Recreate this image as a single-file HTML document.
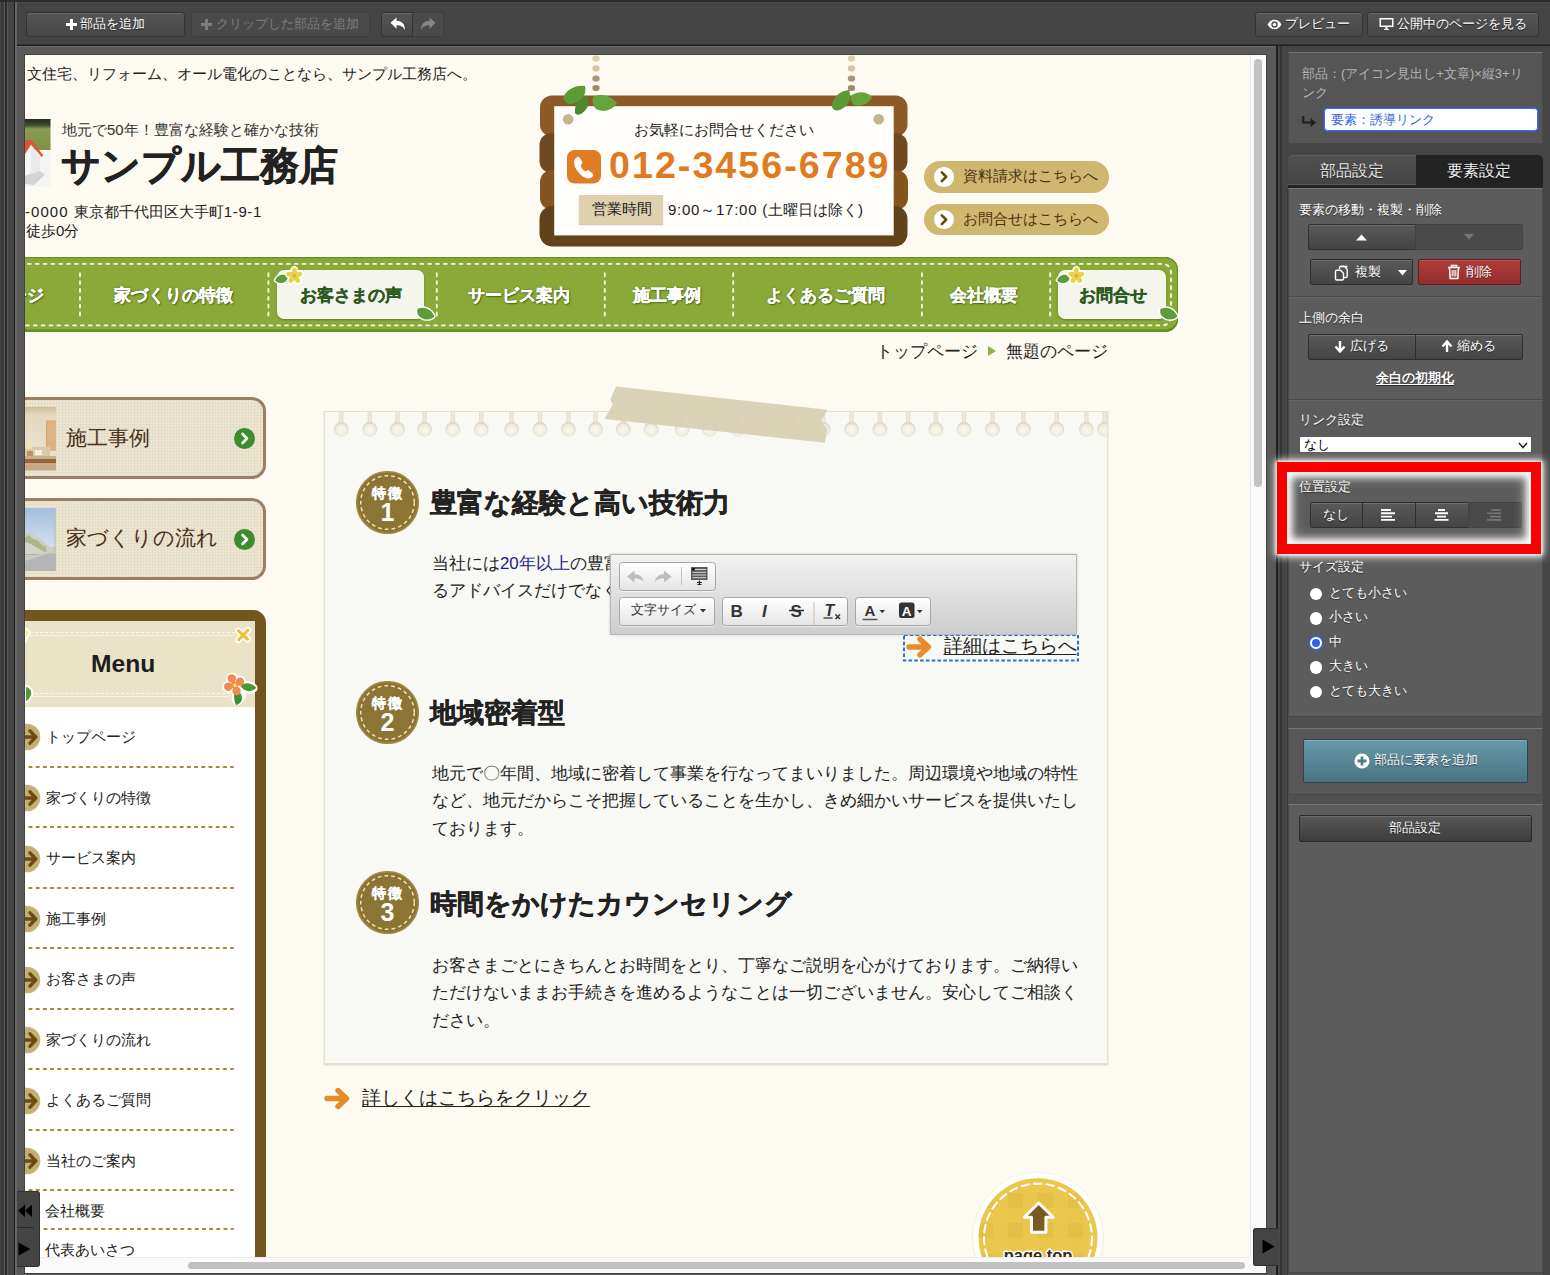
<!DOCTYPE html>
<html lang="ja">
<head>
<meta charset="utf-8">
<title>editor</title>
<style>
*{box-sizing:border-box;margin:0;padding:0}
html,body{width:1550px;height:1275px;overflow:hidden;background:#595959;font-family:"Liberation Sans",sans-serif;}
body{position:relative;color:#fff}
.abs{position:absolute}
/* ---------- app chrome ---------- */
#topbar{position:absolute;left:0;top:0;width:1550px;height:47.300px;background:#444;border-top:2.300px solid #2b2b2b;border-bottom:1px solid #676767;box-shadow:inset 0 -1.500px 0 #1e1e1e,inset 0 .8px 0 #4a4a4a}
#lgut{position:absolute;z-index:3;left:0;top:2.300px;width:16.500px;height:1275px;background:linear-gradient(90deg,#444 0 1.500px,#3a3a3a 1.500px 3.800px,#585858 3.800px 5px,#2c2c2c 5px 7px,#555 7px 8.200px,#444 8.200px 14px,#1f1f1f 14px 15.500px,#656565 15.500px 16.500px)}
#lgut i{position:absolute;top:0;bottom:0;width:1px;background:#555}
.tbtn{position:absolute;top:11.500px;height:25px;border:1px solid #333;border-radius:3px;background:linear-gradient(#555,#474747);color:#fff;font-size:12.5px;line-height:23px;text-align:center;text-shadow:0 1px 1px #222;box-shadow:inset 0 1px 0 rgba(255,255,255,.12);white-space:nowrap}
.tbtn.dis{color:#7d7d7d;background:#4a4a4a;border-color:#3e3e3e;box-shadow:none;text-shadow:none}
.tbtn svg{vertical-align:-2px}
/* ---------- page frame ---------- */
#frame{position:absolute;left:25px;top:55px;width:1241px;height:1217.5px;background:#fafafa;overflow:hidden;outline:1px solid #424242}
#page{position:absolute;left:0;top:0;width:1225px;height:1202px;overflow:hidden;background:#fdfaf1;box-shadow:1px 0 0 #e6e6ea,0 1px 0 #ececec}
#pg{position:absolute;left:-25px;top:-55px;width:1550px;height:1275px;color:#222}
#vthumb{position:absolute;left:1229px;top:4px;width:8px;height:428px;border-radius:4px;background:#c1c1c1}
#hthumb{position:absolute;left:163px;top:1206.5px;width:1057px;height:7px;border-radius:4px;background:#c1c1c1}
</style>
</head>
<body>
<!-- left gutter -->
<div id="lgut"></div>
<!-- top toolbar -->
<div id="topbar"></div>
<div class="tbtn" style="left:26px;width:159px"><svg width="11" height="11" viewBox="0 0 11 11"><path d="M4 0h3v4h4v3H7v4H4V7H0V4h4z" fill="#fff"/></svg> 部品を追加</div>
<div class="tbtn dis" style="left:190.5px;width:179px"><svg width="11" height="11" viewBox="0 0 11 11"><path d="M4 0h3v4h4v3H7v4H4V7H0V4h4z" fill="#7d7d7d"/></svg> クリップした部品を追加</div>
<div class="tbtn" style="left:380.500px;width:32px;border-radius:3px 0 0 3px"></div>
<div class="tbtn dis" style="left:412.500px;width:31px;border-radius:0 3px 3px 0;border-left:none"></div>
<svg class="abs" style="left:389.500px;top:16.500px" width="16" height="14" viewBox="0 0 16 14"><path d="M.5 5.800L6.500.5v3.300c5.500.2 8.500 3.200 8.500 9.500-1.500-3.600-4-5-8.500-5v3.500z" fill="#fff"/></svg>
<svg class="abs" style="left:420px;top:16.500px" width="16" height="14" viewBox="0 0 16 14"><path d="M15.500 5.800L9.500.5v3.300C4 4 1 7 1 13.300c1.500-3.600 4-5 8.500-5v3.500z" fill="#868686"/></svg>

<!-- page frame -->
<div id="frame">
  <div id="page"><div id="pg">
  <style>
.t{position:absolute;white-space:nowrap;line-height:1}
.nav{position:absolute;left:0;top:257.200px;width:1177.5px;height:74.800px;background:#8aa938;border-radius:0 13px 13px 0;box-shadow:inset 0 -2.600px 0 #648f21,inset 0 1.200px 0 #6a9424,inset -1.200px 0 0 #6a9424}
.nav .dash{position:absolute;left:-10px;right:5.5px;top:6px;bottom:5.5px;border:2px dashed #f3f5dc;border-radius:9px}
.nav b.v{position:absolute;top:14px;height:46px;width:0;border-left:2px dashed #f3f5dc}
.nav .it{position:absolute;top:31px;line-height:1;font-size:16.8px;font-weight:bold;color:#fff;-webkit-text-stroke:.35px #fff;text-shadow:1px 1px 1.500px #3f5a12,0 0 2px #4c6a18;white-space:nowrap;transform:translateX(-50%)}
.nav .hl{position:absolute;top:12.800px;height:48.800px;background:#f4f5ec;border-radius:7px;box-shadow:0 1px 2px rgba(60,80,20,.5)}
.nav .it.g{color:#2b5a1f;text-shadow:none;-webkit-text-stroke:.35px #2b5a1f}
.pill{position:absolute;left:923.5px;width:185px;height:31.5px;border-radius:16px;background:#cfb76f;color:#4a3210;font-size:14.8px;line-height:31.5px;padding-left:39.500px;white-space:nowrap}
.pill i{position:absolute;left:10.5px;top:6px;width:19.5px;height:19.5px;border-radius:50%;background:#fff}
</style>
<!-- caption -->
<div class="t" style="left:27px;top:67px;font-size:14.6px;color:#222">文住宅、リフォーム、オール電化のことなら、サンプル工務店へ。</div>
<!-- logo -->
<svg class="abs" style="left:25px;top:118.5px" width="25.5" height="68" viewBox="0 0 25.5 68">
 <defs><linearGradient id="lg1" x1="0" y1="0" x2="0" y2="1"><stop offset="0" stop-color="#23291f"/><stop offset=".2" stop-color="#3c4a33"/><stop offset=".32" stop-color="#8a9b52"/><stop offset="1" stop-color="#7c9340"/></linearGradient></defs>
 <rect width="25.5" height="68" fill="#f5f5f5"/>
 <rect width="25.5" height="31" fill="url(#lg1)"/>
 <path d="M0 35L6 25.500 15 37V52L0 57z" fill="#e9e9e9"/>
 <path d="M0 37L6 27v26L0 57z" fill="#f6f6f6"/>
 <path d="M0 21H6.700L18.300 36.500 16.500 38 6 25 0 35z" fill="#e0533a"/>
 <path d="M0 57L15 52l5 3.500L9 66 0 65z" fill="#d4d4d4"/>
</svg>
<div class="t" style="left:62px;top:122.5px;font-size:14.9px;color:#333">地元で50年！豊富な経験と確かな技術</div>
<div class="t" style="left:61px;top:145.5px;font-size:39.300px;font-weight:bold;color:#222;-webkit-text-stroke:.7px #222">サンプル工務店</div>
<div class="t" style="left:25px;top:204px;font-size:15px;color:#222"><span style="letter-spacing:1.05px">-0000 </span>東京都千代田区大手町<span style="letter-spacing:.6px">1-9-1</span></div>
<div class="t" style="left:26px;top:223px;font-size:15px;color:#222">徒歩0分</div>

<!-- hanging board -->
<svg class="abs" style="left:530px;top:55px" width="390" height="200" viewBox="530 55 390 200">
 <g><ellipse cx="596" cy="58.6" rx="3.700" ry="3.100" fill="#dfcfae"/><ellipse cx="596" cy="68.4" rx="3.700" ry="3.100" fill="#d8c4a0"/><ellipse cx="596" cy="78.5" rx="3.700" ry="3.100" fill="#ab9570"/><ellipse cx="596" cy="88" rx="3.700" ry="3.100" fill="#9e8b69"/><ellipse cx="851.5" cy="58.6" rx="3.700" ry="3.100" fill="#dfcfae"/><ellipse cx="851.5" cy="68.4" rx="3.700" ry="3.100" fill="#d8c4a0"/><ellipse cx="851.5" cy="78.5" rx="3.700" ry="3.100" fill="#ab9570"/><ellipse cx="851.5" cy="88" rx="3.700" ry="3.100" fill="#9e8b69"/></g>
 <rect x="540" y="95.5" width="367.5" height="41" rx="12" fill="#8b5a26"/>
 <rect x="539.5" y="133" width="368" height="40" rx="12" fill="#6f4a20"/>
 <rect x="540" y="170" width="368" height="40" rx="12" fill="#83561f"/>
 <rect x="539.5" y="206" width="368" height="40.5" rx="13" fill="#62421b"/>
 <rect x="554.200" y="106.200" width="339.500" height="129.200" fill="#fffefb"/>
 <circle cx="568.200" cy="119.200" r="5.300" fill="#c5b48f"/><circle cx="878.700" cy="119.200" r="5.300" fill="#c5b48f"/>
 <!-- leaves -->
 <g>
  <path d="M563 98c3-8 12-13 22-12 2 8-3 16-13 18-4 1-7-2-9-6z" fill="#5d9a35"/>
  <path d="M575 113c-1-8 4-15 12-17 3 6 1 14-6 18-3 1-5 1-6-1z" fill="#4b8a2c"/>
  <path d="M593 97c7-4 17-2 24 6-4 7-13 10-21 6-3-3-4-8-3-12z" fill="#66a53b"/>
  <path d="M832 107c0-9 7-16 17-17 3 8 0 16-9 20-4 1-7 0-8-3z" fill="#5d9a35"/>
  <path d="M851 96c6-5 15-5 21 1-3 7-11 10-18 8-3-3-4-6-3-9z" fill="#66a53b"/>
 </g>
 <!-- phone icon -->
 <rect x="567" y="150" width="34" height="33.5" rx="7.5" fill="#e07d22"/>
 <path d="M575.5 158.5c1.6-1.8 3.2-2.4 4.2-.8l2.4 3.8c.8 1.2.2 2.2-1 3.2-1 .9-.6 1.800 1.200 4.000 1.800 2.200 3.000 3.000 4.000 2.200 1.200-1 2.200-1.200 3.200-.2l3.200 3.100c1.300 1.300.4 2.700-1.700 4.000-3.400 2.100-8.600-.6-12.800-5.800-4.200-5.200-5.300-10.700-2.700-13.500z" fill="#fff"/>
</svg>
<div class="t" style="left:724px;top:122.5px;font-size:14.8px;color:#222;transform:translateX(-50%)">お気軽にお問合せください</div>
<div class="t" id="tel" style="left:609px;top:147px;font-size:37.6px;font-weight:bold;color:#e07a20;letter-spacing:2.05px">012-3456-6789</div>
<div class="abs" style="left:579px;top:194.5px;width:83.5px;height:29px;background:#ddd1ae;box-shadow:0 1px 1px rgba(120,100,60,.35)"></div>
<div class="t" style="left:591.5px;top:201.5px;font-size:14.7px;color:#222">営業時間</div>
<div class="t" style="left:668px;top:201.5px;font-size:15px;color:#222"><span style="letter-spacing:.75px">9:00～17:00 (</span>土曜日は除く)</div>

<!-- pills -->
<div class="pill" style="top:161px"><i></i><svg class="abs" style="left:10.5px;top:6px" width="19.5" height="19.5" viewBox="0 0 20 20"><path d="M8 5.500l4.500 4.500-4.500 4.500" fill="none" stroke="#6b4a10" stroke-width="2.600" stroke-linecap="round" stroke-linejoin="round"/></svg>資料請求はこちらへ</div>
<div class="pill" style="top:203.5px"><i></i><svg class="abs" style="left:10.5px;top:6px" width="19.5" height="19.5" viewBox="0 0 20 20"><path d="M8 5.500l4.500 4.500-4.500 4.500" fill="none" stroke="#6b4a10" stroke-width="2.600" stroke-linecap="round" stroke-linejoin="round"/></svg>お問合せはこちらへ</div>

<!-- nav -->
<div class="nav">
 <svg class="abs" style="left:0;top:0" width="1178" height="75" viewBox="0 0 1178 75"><g fill="none" stroke="#f4f6de" stroke-width="1.900" stroke-dasharray="2.900 4.950" stroke-linecap="round"><path d="M20 6.900H1162.500a8.500 8.500 0 0 1 8.500 8.500V59.900a8.500 8.500 0 0 1-8.500 8.500H20"/><path d="M80.0 16.300V61"/><path d="M268.4 16.300V61"/><path d="M436.8 16.300V61"/><path d="M604.8 16.300V61"/><path d="M733.2 16.300V61"/><path d="M921.9 16.300V61"/><path d="M1050.2 16.300V61"/></g></svg>
 <div class="hl" style="left:276.5px;width:147px"></div>
 <div class="hl" style="left:1058px;width:108px"></div>
 <div class="it" style="left:27px">ージ</div>
 <div class="it" style="left:173px">家づくりの特徴</div>
 <div class="it g" style="left:350.5px">お客さまの声</div>
 <div class="it" style="left:519px">サービス案内</div>
 <div class="it" style="left:667px">施工事例</div>
 <div class="it" style="left:825.5px">よくあるご質問</div>
 <div class="it" style="left:984px">会社概要</div>
 <div class="it g" style="left:1113px">お問合せ</div>
 <!-- decorations -->
 <svg class="abs" style="left:272px;top:7.8px" width="32" height="24" viewBox="0 0 32 24"><path d="M3 15.500C5 9.500 12 8 16.500 11.500 15.500 17.500 8.500 20.500 3 15.500z" fill="#5c9c3a" stroke="#fff" stroke-width="2.600" stroke-linejoin="round" paint-order="stroke"/><g fill="#fff"><ellipse cx="22.3" cy="6.5" rx="4.200" ry="5.800" transform="rotate(0 22.3 6.5)"/><ellipse cx="26.4" cy="9.5" rx="4.200" ry="5.800" transform="rotate(72 26.4 9.5)"/><ellipse cx="24.8" cy="14.3" rx="4.200" ry="5.800" transform="rotate(144 24.8 14.3)"/><ellipse cx="19.8" cy="14.3" rx="4.200" ry="5.800" transform="rotate(216 19.8 14.3)"/><ellipse cx="18.2" cy="9.5" rx="4.200" ry="5.800" transform="rotate(288 18.2 9.5)"/></g><g fill="#e3d64b"><ellipse cx="22.3" cy="6.5" rx="2.500" ry="4.100" transform="rotate(0 22.3 6.5)"/><ellipse cx="26.4" cy="9.5" rx="2.500" ry="4.100" transform="rotate(72 26.4 9.5)"/><ellipse cx="24.8" cy="14.3" rx="2.500" ry="4.100" transform="rotate(144 24.8 14.3)"/><ellipse cx="19.8" cy="14.3" rx="2.500" ry="4.100" transform="rotate(216 19.8 14.3)"/><ellipse cx="18.2" cy="9.5" rx="2.500" ry="4.100" transform="rotate(288 18.2 9.5)"/></g><circle cx="22.3" cy="10.8" r="1.900" fill="#f0a63a"/></svg>
 <svg class="abs" style="left:415px;top:48.3px" width="22" height="18" viewBox="0 0 22 18"><path d="M2.500 4C8 1 16 3 19.500 11.500 15 16 6.500 15.500 2.800 9.500 2 7.500 2 5.500 2.500 4z" fill="#5c9c3a" stroke="#fff" stroke-width="2.600" stroke-linejoin="round" paint-order="stroke"/></svg>
 <svg class="abs" style="left:1053.5px;top:7.8px" width="32" height="24" viewBox="0 0 32 24"><path d="M3 15.500C5 9.500 12 8 16.500 11.500 15.500 17.500 8.500 20.500 3 15.500z" fill="#5c9c3a" stroke="#fff" stroke-width="2.600" stroke-linejoin="round" paint-order="stroke"/><g fill="#fff"><ellipse cx="22.3" cy="6.5" rx="4.200" ry="5.800" transform="rotate(0 22.3 6.5)"/><ellipse cx="26.4" cy="9.5" rx="4.200" ry="5.800" transform="rotate(72 26.4 9.5)"/><ellipse cx="24.8" cy="14.3" rx="4.200" ry="5.800" transform="rotate(144 24.8 14.3)"/><ellipse cx="19.8" cy="14.3" rx="4.200" ry="5.800" transform="rotate(216 19.8 14.3)"/><ellipse cx="18.2" cy="9.5" rx="4.200" ry="5.800" transform="rotate(288 18.2 9.5)"/></g><g fill="#e3d64b"><ellipse cx="22.3" cy="6.5" rx="2.500" ry="4.100" transform="rotate(0 22.3 6.5)"/><ellipse cx="26.4" cy="9.5" rx="2.500" ry="4.100" transform="rotate(72 26.4 9.5)"/><ellipse cx="24.8" cy="14.3" rx="2.500" ry="4.100" transform="rotate(144 24.8 14.3)"/><ellipse cx="19.8" cy="14.3" rx="2.500" ry="4.100" transform="rotate(216 19.8 14.3)"/><ellipse cx="18.2" cy="9.5" rx="2.500" ry="4.100" transform="rotate(288 18.2 9.5)"/></g><circle cx="22.3" cy="10.8" r="1.900" fill="#f0a63a"/></svg>
 <svg class="abs" style="left:1157.6px;top:48.3px" width="22" height="18" viewBox="0 0 22 18"><path d="M2.500 4C8 1 16 3 19.500 11.500 15 16 6.500 15.500 2.800 9.500 2 7.500 2 5.500 2.500 4z" fill="#5c9c3a" stroke="#fff" stroke-width="2.600" stroke-linejoin="round" paint-order="stroke"/></svg>
</div>
<!-- breadcrumb -->
<div class="t" style="left:876px;top:344px;font-size:16.600px;color:#222">トップページ<span style="display:inline-block;width:0;height:0;border-left:8px solid #8fb24a;border-top:5.5px solid transparent;border-bottom:5.5px solid transparent;margin:0 10.500px 0 9.500px;vertical-align:1px"></span>無題のページ</div>

<style>
.bnr{position:absolute;left:-10px;width:275.5px;height:82px;border:3.500px solid #9c7d66;border-radius:14px;background-color:#ece6d2;background-image:repeating-linear-gradient(0deg,rgba(190,178,140,.14) 0 1px,transparent 1px 3px),repeating-linear-gradient(90deg,rgba(190,178,140,.14) 0 1px,transparent 1px 3px)}
.bnr .tx{position:absolute;left:76px;font-size:20.9px;color:#4a3018;line-height:1;white-space:nowrap}
.gc{position:absolute;left:234px;width:21px;height:21px;border-radius:50%;background:#3f8c30}
.menu{position:absolute;left:-10px;top:609.500px;width:275.5px;height:700px;border:11px solid #73551e;border-radius:13px;background:#fff}
.mhead{position:absolute;left:0;top:0;width:100%;height:86.5px;background:#ebe3c8}
.mhead .ln{position:absolute;left:14px;height:4.600px;border-top:1.200px dashed #fbf8ee;border-bottom:1.200px solid #f6f1e0}
.mi{position:absolute;left:46px;font-size:14.6px;line-height:1;color:#222;white-space:nowrap}
.ml{position:absolute;left:27.5px;width:206px;height:2px;margin-top:.3px;background:repeating-linear-gradient(90deg,#b28f3e 0 2.800px,transparent 2.800px 5.500px)}
.mic{position:absolute;left:18px;width:21.5px;height:21.5px;border-radius:50%;background:#b9a874}
</style>
<!-- banners -->
<div class="bnr" style="top:397px"></div>
<svg class="abs" style="left:25px;top:407px" width="31" height="63.5" viewBox="0 0 31 63.500"><defs><linearGradient id="t1a" x1="0" y1="0" x2="0" y2="1"><stop offset="0" stop-color="#cdbb98"/><stop offset=".12" stop-color="#e4d8bd"/><stop offset=".6" stop-color="#eadfc9"/></linearGradient><linearGradient id="t2a" x1="0" y1="0" x2="0" y2="1"><stop offset="0" stop-color="#a3bde0"/><stop offset=".55" stop-color="#cfdcec"/><stop offset=".75" stop-color="#dfe6ee"/></linearGradient></defs><rect width="31" height="63.500" fill="url(#t1a)"/><rect x="21" y="13.500" width="10" height="30" fill="#d3a874"/><rect x="22" y="14.500" width="9" height="29" fill="#dcb484"/><rect y="40" width="25" height="9.500" fill="#dcc9a8"/><rect x="1" y="35" width="6" height="7" fill="#f0e0b8"/><rect x="10" y="43" width="7" height="5" fill="#f6f0e2"/><rect x="2" y="44" width="6" height="5" fill="#b89468"/><rect y="49" width="31" height="3.500" fill="#c9ae88"/><rect y="52" width="31" height="4" fill="#94683c"/><rect y="56" width="31" height="7.500" fill="#c8a888"/></svg>
<div class="t" style="left:66px;top:427.5px;font-size:20.9px;color:#4a3018">施工事例</div>
<div class="gc" style="top:428px"></div><svg class="abs" style="left:234px;top:428px" width="21" height="21" viewBox="0 0 21 21"><path d="M8.500 6l4.500 4.500-4.500 4.500" fill="none" stroke="#fff" stroke-width="2.600" stroke-linecap="round" stroke-linejoin="round"/></svg>
<div class="bnr" style="top:497.5px"></div>
<svg class="abs" style="left:25px;top:507.500px" width="31" height="63.5" viewBox="0 0 31 63.500"><rect width="31" height="63.500" fill="url(#t2a)"/><path d="M0 23l3 2 4-1 4 5 5 2 5 5 5 3 5 0v10H0z" fill="#cfcdc4"/><path d="M0 30l4-3 4 4 4 1 5 5 4 2v8H0z" fill="#aab78c"/><path d="M0 34l6 2 8 5 10 5H0z" fill="#d6d3ca"/><path d="M28.500 0L31 4v42h-2z" fill="#b9c4b0" opacity=".6"/><path d="M0 49L22 45l9 1v17.500H0z" fill="#b3b5b7"/><path d="M0 49L22 45l3 .3L0 53z" fill="#c9cacb"/></svg>
<div class="t" style="left:66px;top:528px;font-size:20.9px;color:#4a3018">家づくりの流れ</div>
<div class="gc" style="top:529px"></div><svg class="abs" style="left:234px;top:529px" width="21" height="21" viewBox="0 0 21 21"><path d="M8.500 6l4.500 4.500-4.500 4.500" fill="none" stroke="#fff" stroke-width="2.600" stroke-linecap="round" stroke-linejoin="round"/></svg>

<!-- menu -->
<div class="menu"><div class="mhead"><div class="ln" style="top:11.300px;width:220px"></div><div class="ln" style="top:72.200px;width:215px"></div></div></div>
<div class="t" style="left:91px;top:652px;font-size:24.600px;font-weight:bold;color:#1d1d1d">Menu</div>
<!-- flowers -->
<svg class="abs" style="left:233.700px;top:626.400px" width="18" height="18" viewBox="0 0 18 18"><g stroke-linecap="round" fill="none"><path d="M4.500 4.800L13.500 13.200M13.800 4.200L4.800 13.800" stroke="#fff" stroke-width="6.500"/><path d="M4.500 4.800L13.500 13.200M13.800 4.200L4.800 13.800" stroke="#efbf30" stroke-width="3"/></g><circle cx="9" cy="9" r="2.200" fill="#efbf30"/></svg>
<svg class="abs" style="left:220px;top:671px" width="40" height="36" viewBox="0 0 40 36"><g fill="#fff"><circle cx="11.8" cy="7.5" r="6"/><circle cx="20" cy="10.7" r="6"/><circle cx="8.2" cy="15.8" r="6"/><circle cx="16.5" cy="20" r="6"/><circle cx="14.500" cy="14" r="5"/><ellipse cx="28.200" cy="16.500" rx="9.500" ry="6.200" transform="rotate(8 28.200 16.500)"/><ellipse cx="18.800" cy="25.600" rx="6.500" ry="9" transform="rotate(25 18.800 25.600)"/></g><path d="M20.500 15c4-4 11-3.500 16 1.800-4.500 4.500-11.500 5-16-1.800z" fill="#4a9a34"/><path d="M15 19.500c5 .5 8 5 6.500 10-1 2.500-3 4-5.500 4.500-1.800-4-2.800-9-1-14.500z" fill="#3f8f2e"/><g fill="#ee8a52"><circle cx="11.8" cy="7.5" r="4.200"/><circle cx="20" cy="10.7" r="4.200"/><circle cx="8.2" cy="15.8" r="4.200"/><circle cx="16.5" cy="20" r="4.200"/><circle cx="14.500" cy="14" r="3.500"/></g><circle cx="14.900" cy="14.200" r="1.900" fill="#f6e23a"/></svg>
<svg class="abs" style="left:25px;top:626px" width="8" height="22" viewBox="0 0 8 22"><path d="M0 2l5 4-5 10z" fill="#f3ea5a" stroke="#fff" stroke-width="2"/></svg>
<svg class="abs" style="left:25px;top:682px" width="10" height="24" viewBox="0 0 10 24"><path d="M0 4c5 0 8 4 7 9-2 5-5 7-7 7z" fill="#4f9a38" stroke="#fff" stroke-width="2"/></svg>
<svg class="abs" style="left:13px;top:723px" width="28" height="28" viewBox="0 0 28 28"><circle cx="14" cy="14" r="13.300" fill="#c8b67e"/><circle cx="14" cy="14" r="12" fill="#c2af74"/><path d="M11 14h10M17 7.800l5.800 6.200-5.800 6.200" fill="none" stroke="#6b4d13" stroke-width="3.300" stroke-linecap="round" stroke-linejoin="round"/></svg>
<svg class="abs" style="left:27px;top:764.5px" width="208" height="4" viewBox="0 0 208 4"><path d="M2.300 2H206" stroke="#a8863a" stroke-width="1.900" stroke-dasharray="2.400 4.800" stroke-linecap="round"/></svg>
<svg class="abs" style="left:13px;top:784px" width="28" height="28" viewBox="0 0 28 28"><circle cx="14" cy="14" r="13.300" fill="#c8b67e"/><circle cx="14" cy="14" r="12" fill="#c2af74"/><path d="M11 14h10M17 7.800l5.800 6.200-5.800 6.200" fill="none" stroke="#6b4d13" stroke-width="3.300" stroke-linecap="round" stroke-linejoin="round"/></svg>
<svg class="abs" style="left:27px;top:825.0px" width="208" height="4" viewBox="0 0 208 4"><path d="M2.300 2H206" stroke="#a8863a" stroke-width="1.900" stroke-dasharray="2.400 4.800" stroke-linecap="round"/></svg>
<svg class="abs" style="left:13px;top:844.5px" width="28" height="28" viewBox="0 0 28 28"><circle cx="14" cy="14" r="13.300" fill="#c8b67e"/><circle cx="14" cy="14" r="12" fill="#c2af74"/><path d="M11 14h10M17 7.800l5.800 6.200-5.800 6.200" fill="none" stroke="#6b4d13" stroke-width="3.300" stroke-linecap="round" stroke-linejoin="round"/></svg>
<svg class="abs" style="left:27px;top:885.5px" width="208" height="4" viewBox="0 0 208 4"><path d="M2.300 2H206" stroke="#a8863a" stroke-width="1.900" stroke-dasharray="2.400 4.800" stroke-linecap="round"/></svg>
<svg class="abs" style="left:13px;top:905px" width="28" height="28" viewBox="0 0 28 28"><circle cx="14" cy="14" r="13.300" fill="#c8b67e"/><circle cx="14" cy="14" r="12" fill="#c2af74"/><path d="M11 14h10M17 7.800l5.800 6.200-5.800 6.200" fill="none" stroke="#6b4d13" stroke-width="3.300" stroke-linecap="round" stroke-linejoin="round"/></svg>
<svg class="abs" style="left:27px;top:946.0px" width="208" height="4" viewBox="0 0 208 4"><path d="M2.300 2H206" stroke="#a8863a" stroke-width="1.900" stroke-dasharray="2.400 4.800" stroke-linecap="round"/></svg>
<svg class="abs" style="left:13px;top:965.5px" width="28" height="28" viewBox="0 0 28 28"><circle cx="14" cy="14" r="13.300" fill="#c8b67e"/><circle cx="14" cy="14" r="12" fill="#c2af74"/><path d="M11 14h10M17 7.800l5.800 6.200-5.800 6.200" fill="none" stroke="#6b4d13" stroke-width="3.300" stroke-linecap="round" stroke-linejoin="round"/></svg>
<svg class="abs" style="left:27px;top:1006.5px" width="208" height="4" viewBox="0 0 208 4"><path d="M2.300 2H206" stroke="#a8863a" stroke-width="1.900" stroke-dasharray="2.400 4.800" stroke-linecap="round"/></svg>
<svg class="abs" style="left:13px;top:1026px" width="28" height="28" viewBox="0 0 28 28"><circle cx="14" cy="14" r="13.300" fill="#c8b67e"/><circle cx="14" cy="14" r="12" fill="#c2af74"/><path d="M11 14h10M17 7.800l5.800 6.200-5.800 6.200" fill="none" stroke="#6b4d13" stroke-width="3.300" stroke-linecap="round" stroke-linejoin="round"/></svg>
<svg class="abs" style="left:27px;top:1067.0px" width="208" height="4" viewBox="0 0 208 4"><path d="M2.300 2H206" stroke="#a8863a" stroke-width="1.900" stroke-dasharray="2.400 4.800" stroke-linecap="round"/></svg>
<svg class="abs" style="left:13px;top:1086.5px" width="28" height="28" viewBox="0 0 28 28"><circle cx="14" cy="14" r="13.300" fill="#c8b67e"/><circle cx="14" cy="14" r="12" fill="#c2af74"/><path d="M11 14h10M17 7.800l5.800 6.200-5.800 6.200" fill="none" stroke="#6b4d13" stroke-width="3.300" stroke-linecap="round" stroke-linejoin="round"/></svg>
<svg class="abs" style="left:27px;top:1127.5px" width="208" height="4" viewBox="0 0 208 4"><path d="M2.300 2H206" stroke="#a8863a" stroke-width="1.900" stroke-dasharray="2.400 4.800" stroke-linecap="round"/></svg>
<svg class="abs" style="left:13px;top:1147px" width="28" height="28" viewBox="0 0 28 28"><circle cx="14" cy="14" r="13.300" fill="#c8b67e"/><circle cx="14" cy="14" r="12" fill="#c2af74"/><path d="M11 14h10M17 7.800l5.800 6.200-5.800 6.200" fill="none" stroke="#6b4d13" stroke-width="3.300" stroke-linecap="round" stroke-linejoin="round"/></svg>
<svg class="abs" style="left:27px;top:1188.0px" width="208" height="4" viewBox="0 0 208 4"><path d="M2.300 2H206" stroke="#a8863a" stroke-width="1.900" stroke-dasharray="2.400 4.800" stroke-linecap="round"/></svg>
<svg class="abs" style="left:42px;top:1227.200px" width="193" height="4" viewBox="0 0 193 4"><path d="M2.300 2H191" stroke="#a8863a" stroke-width="1.900" stroke-dasharray="2.400 4.800" stroke-linecap="round"/></svg>
<div class="mi" style="top:729.7px">トップページ</div>
<div class="mi" style="top:790.7px">家づくりの特徴</div>
<div class="mi" style="top:851.2px">サービス案内</div>
<div class="mi" style="top:911.7px">施工事例</div>
<div class="mi" style="top:972.2px">お客さまの声</div>
<div class="mi" style="top:1032.7px">家づくりの流れ</div>
<div class="mi" style="top:1093.2px">よくあるご質問</div>
<div class="mi" style="top:1153.7px">当社のご案内</div>
<div class="mi" style="top:1203.5px;left:45px">会社概要</div>
<div class="mi" style="top:1242.5px;left:45px">代表あいさつ</div>

<style>
.card{position:absolute;left:324px;top:411px;width:784px;height:652.5px;background:#f8f8f5;border:1px solid #e4dfd5;box-shadow:0 1px 1.500px rgba(160,145,120,.4)}
.h2{position:absolute;left:430px;font-size:27.3px;font-weight:bold;color:#222;-webkit-text-stroke:.45px #222;line-height:1;white-space:nowrap}
.bd{position:absolute;left:432px;width:660px;font-size:16.85px;line-height:27.35px;color:#222}
.bdg{position:absolute;left:355.5px;width:63px;height:63px}
.ck{position:absolute;left:609.5px;top:554px;width:467.5px;height:80.5px;border:1px solid #b6b6b6;background:linear-gradient(#f2f2f2,#cdcdcd);box-shadow:0 0 3px rgba(0,0,0,.15)}
.ckg{position:absolute;height:29.5px;border:1px solid #a6a6a6;border-radius:3.5px;background:linear-gradient(#fff,#e4e4e4);box-shadow:0 1px 0 rgba(255,255,255,.5)}
.lnk{font-size:18.95px;color:#222;text-decoration:underline;text-underline-offset:2px;text-decoration-thickness:1.300px}
</style>
<div class="card"></div>
<!-- holes -->
<svg class="abs" style="left:325px;top:412px;overflow:hidden" width="782" height="30" viewBox="325 412 782 30">
<defs><radialGradient id="hg" cx="50%" cy="55%" r="55%"><stop offset="0" stop-color="#faf7ee"/><stop offset=".65" stop-color="#f3eee2"/><stop offset="1" stop-color="#d8d0bf"/></radialGradient></defs>
<g id="holes"></g>
<rect x="339.1" y="412" width="4.400" height="12" fill="#e6dfcf"/><rect x="340.3" y="412" width="2" height="12" fill="#efe9dc"/><circle cx="341.3" cy="429.400" r="7.300" fill="url(#hg)"/><rect x="367.5" y="412" width="4.400" height="12" fill="#e6dfcf"/><rect x="368.7" y="412" width="2" height="12" fill="#efe9dc"/><circle cx="369.7" cy="429.400" r="7.300" fill="url(#hg)"/><rect x="395.3" y="412" width="4.400" height="12" fill="#e6dfcf"/><rect x="396.5" y="412" width="2" height="12" fill="#efe9dc"/><circle cx="397.5" cy="429.400" r="7.300" fill="url(#hg)"/><rect x="422.4" y="412" width="4.400" height="12" fill="#e6dfcf"/><rect x="423.6" y="412" width="2" height="12" fill="#efe9dc"/><circle cx="424.6" cy="429.400" r="7.300" fill="url(#hg)"/><rect x="450.6" y="412" width="4.400" height="12" fill="#e6dfcf"/><rect x="451.8" y="412" width="2" height="12" fill="#efe9dc"/><circle cx="452.8" cy="429.400" r="7.300" fill="url(#hg)"/><rect x="479.0" y="412" width="4.400" height="12" fill="#e6dfcf"/><rect x="480.2" y="412" width="2" height="12" fill="#efe9dc"/><circle cx="481.2" cy="429.400" r="7.300" fill="url(#hg)"/><rect x="509.4" y="412" width="4.400" height="12" fill="#e6dfcf"/><rect x="510.6" y="412" width="2" height="12" fill="#efe9dc"/><circle cx="511.6" cy="429.400" r="7.300" fill="url(#hg)"/><rect x="537.8" y="412" width="4.400" height="12" fill="#e6dfcf"/><rect x="539.0" y="412" width="2" height="12" fill="#efe9dc"/><circle cx="540.0" cy="429.400" r="7.300" fill="url(#hg)"/><rect x="566.2" y="412" width="4.400" height="12" fill="#e6dfcf"/><rect x="567.4" y="412" width="2" height="12" fill="#efe9dc"/><circle cx="568.4" cy="429.400" r="7.300" fill="url(#hg)"/><rect x="593.3" y="412" width="4.400" height="12" fill="#e6dfcf"/><rect x="594.5" y="412" width="2" height="12" fill="#efe9dc"/><circle cx="595.5" cy="429.400" r="7.300" fill="url(#hg)"/><rect x="621.1" y="412" width="4.400" height="12" fill="#e6dfcf"/><rect x="622.3" y="412" width="2" height="12" fill="#efe9dc"/><circle cx="623.3" cy="429.400" r="7.300" fill="url(#hg)"/><rect x="649.0" y="412" width="4.400" height="12" fill="#e6dfcf"/><rect x="650.2" y="412" width="2" height="12" fill="#efe9dc"/><circle cx="651.2" cy="429.400" r="7.300" fill="url(#hg)"/><rect x="679.9" y="412" width="4.400" height="12" fill="#e6dfcf"/><rect x="681.1" y="412" width="2" height="12" fill="#efe9dc"/><circle cx="682.1" cy="429.400" r="7.300" fill="url(#hg)"/><rect x="707.3" y="412" width="4.400" height="12" fill="#e6dfcf"/><rect x="708.5" y="412" width="2" height="12" fill="#efe9dc"/><circle cx="709.5" cy="429.400" r="7.300" fill="url(#hg)"/><rect x="735.7" y="412" width="4.400" height="12" fill="#e6dfcf"/><rect x="736.9" y="412" width="2" height="12" fill="#efe9dc"/><circle cx="737.9" cy="429.400" r="7.300" fill="url(#hg)"/><rect x="763.0" y="412" width="4.400" height="12" fill="#e6dfcf"/><rect x="764.2" y="412" width="2" height="12" fill="#efe9dc"/><circle cx="765.2" cy="429.400" r="7.300" fill="url(#hg)"/><rect x="790.7" y="412" width="4.400" height="12" fill="#e6dfcf"/><rect x="791.9" y="412" width="2" height="12" fill="#efe9dc"/><circle cx="792.9" cy="429.400" r="7.300" fill="url(#hg)"/><rect x="820.9" y="412" width="4.400" height="12" fill="#e6dfcf"/><rect x="822.1" y="412" width="2" height="12" fill="#efe9dc"/><circle cx="823.1" cy="429.400" r="7.300" fill="url(#hg)"/><rect x="849.3" y="412" width="4.400" height="12" fill="#e6dfcf"/><rect x="850.5" y="412" width="2" height="12" fill="#efe9dc"/><circle cx="851.5" cy="429.400" r="7.300" fill="url(#hg)"/><rect x="877.7" y="412" width="4.400" height="12" fill="#e6dfcf"/><rect x="878.9" y="412" width="2" height="12" fill="#efe9dc"/><circle cx="879.9" cy="429.400" r="7.300" fill="url(#hg)"/><rect x="906.0" y="412" width="4.400" height="12" fill="#e6dfcf"/><rect x="907.2" y="412" width="2" height="12" fill="#efe9dc"/><circle cx="908.2" cy="429.400" r="7.300" fill="url(#hg)"/><rect x="933.7" y="412" width="4.400" height="12" fill="#e6dfcf"/><rect x="934.9" y="412" width="2" height="12" fill="#efe9dc"/><circle cx="935.9" cy="429.400" r="7.300" fill="url(#hg)"/><rect x="961.8" y="412" width="4.400" height="12" fill="#e6dfcf"/><rect x="963.0" y="412" width="2" height="12" fill="#efe9dc"/><circle cx="964.0" cy="429.400" r="7.300" fill="url(#hg)"/><rect x="990.3" y="412" width="4.400" height="12" fill="#e6dfcf"/><rect x="991.5" y="412" width="2" height="12" fill="#efe9dc"/><circle cx="992.5" cy="429.400" r="7.300" fill="url(#hg)"/><rect x="1021.2" y="412" width="4.400" height="12" fill="#e6dfcf"/><rect x="1022.4" y="412" width="2" height="12" fill="#efe9dc"/><circle cx="1023.4" cy="429.400" r="7.300" fill="url(#hg)"/><rect x="1054.6" y="412" width="4.400" height="12" fill="#e6dfcf"/><rect x="1055.8" y="412" width="2" height="12" fill="#efe9dc"/><circle cx="1056.8" cy="429.400" r="7.300" fill="url(#hg)"/><rect x="1084.2" y="412" width="4.400" height="12" fill="#e6dfcf"/><rect x="1085.4" y="412" width="2" height="12" fill="#efe9dc"/><circle cx="1086.4" cy="429.400" r="7.300" fill="url(#hg)"/><rect x="1102.4" y="412" width="4.400" height="12" fill="#e6dfcf"/><rect x="1103.6" y="412" width="2" height="12" fill="#efe9dc"/><circle cx="1104.6" cy="429.400" r="7.300" fill="url(#hg)"/>
</svg>
<!-- tape -->
<svg class="abs" style="left:600px;top:380px" width="235" height="70" viewBox="600 380 235 70"><path d="M616 386.600L827.300 409.700 820.800 421.800 827.300 428.200 824.800 442.700 604.700 418.900 612.700 404.800 610.300 399.200z" fill="#d9d0b2" opacity=".94"/></svg>

<svg class="bdg" style="top:470.5px" viewBox="0 0 63 63"><circle cx="31.500" cy="32" r="31" fill="#6b5624" opacity=".5"/><circle cx="31.500" cy="31.500" r="30.800" fill="#8b7434"/><circle cx="31.500" cy="31.500" r="30.800" fill="none" stroke="#a28a45" stroke-width="1.500"/><circle cx="31.500" cy="31.500" r="26.800" fill="none" stroke="#efe2b0" stroke-width="1.500" stroke-dasharray="3.800 3"/><text x="31.500" y="26.500" text-anchor="middle" font-family="Liberation Sans" font-weight="bold" font-size="13.500" fill="#fff" stroke="#fff" stroke-width=".35" letter-spacing="1.500">特徴</text><text x="31.500" y="50" text-anchor="middle" font-family="Liberation Sans" font-weight="bold" font-size="25" fill="#fff">1</text></svg>
<svg class="bdg" style="top:680.5px" viewBox="0 0 63 63"><circle cx="31.500" cy="32" r="31" fill="#6b5624" opacity=".5"/><circle cx="31.500" cy="31.500" r="30.800" fill="#8b7434"/><circle cx="31.500" cy="31.500" r="30.800" fill="none" stroke="#a28a45" stroke-width="1.500"/><circle cx="31.500" cy="31.500" r="26.800" fill="none" stroke="#efe2b0" stroke-width="1.500" stroke-dasharray="3.800 3"/><text x="31.500" y="26.500" text-anchor="middle" font-family="Liberation Sans" font-weight="bold" font-size="13.500" fill="#fff" stroke="#fff" stroke-width=".35" letter-spacing="1.500">特徴</text><text x="31.500" y="50" text-anchor="middle" font-family="Liberation Sans" font-weight="bold" font-size="25" fill="#fff">2</text></svg>
<svg class="bdg" style="top:871.2px" viewBox="0 0 63 63"><circle cx="31.500" cy="32" r="31" fill="#6b5624" opacity=".5"/><circle cx="31.500" cy="31.500" r="30.800" fill="#8b7434"/><circle cx="31.500" cy="31.500" r="30.800" fill="none" stroke="#a28a45" stroke-width="1.500"/><circle cx="31.500" cy="31.500" r="26.800" fill="none" stroke="#efe2b0" stroke-width="1.500" stroke-dasharray="3.800 3"/><text x="31.500" y="26.500" text-anchor="middle" font-family="Liberation Sans" font-weight="bold" font-size="13.500" fill="#fff" stroke="#fff" stroke-width=".35" letter-spacing="1.500">特徴</text><text x="31.500" y="50" text-anchor="middle" font-family="Liberation Sans" font-weight="bold" font-size="25" fill="#fff">3</text></svg>
<div class="h2" style="top:489px">豊富な経験と高い技術力</div>
<div class="bd" style="top:549.8px">当社には<span style="color:#1a1a8e">20年以上</span>の豊富な経験と高い技術力があります。住宅に関す<br>るアドバイスだけでなく、</div>
<div class="h2" style="top:698.5px">地域密着型</div>
<div class="bd" style="top:760px">地元で〇年間、地域に密着して事業を行なってまいりました。周辺環境や地域の特性<br>など、地元だからこそ把握していることを生かし、きめ細かいサービスを提供いたし<br>ております。</div>
<div class="h2" style="top:889.5px">時間をかけたカウンセリング</div>
<div class="bd" style="top:951.9px">お客さまごとにきちんとお時間をとり、丁寧なご説明を心がけております。ご納得い<br>ただけないままお手続きを進めるようなことは一切ございません。安心してご相談く<br>ださい。</div>

<!-- link box -->
<svg class="abs" style="left:902px;top:632.500px" width="178" height="29" viewBox="0 0 178 29"><rect x="2" y="2" width="174" height="25.500" fill="none" stroke="#2b73c6" stroke-width="2" stroke-dasharray="3.600 2.200"/></svg>
<svg class="abs" style="left:906px;top:636px" width="27" height="22" viewBox="0 0 27 22"><path d="M3 11h18M14 3.200l8.500 7.800-8.500 7.800" fill="none" stroke="#e78c2b" stroke-width="5.400" stroke-linecap="round" stroke-linejoin="round"/></svg>
<div class="t lnk" style="left:943.5px;top:637px">詳細はこちらへ</div>

<!-- editor toolbar -->
<div class="ck">
 <div class="ckg" style="left:8px;top:6.500px;width:97px"></div>
 <div class="ckg" style="left:8px;top:41.500px;width:96.500px"></div>
 <div class="ckg" style="left:111px;top:41.500px;width:126px"></div>
 <div class="ckg" style="left:244px;top:41.500px;width:76px"></div>
</div>
<svg class="abs" style="left:608.500px;top:553px" width="468" height="81" viewBox="0 0 468 81">
 <path d="M18 23.500l7.500-6v3.800c5 0 8.500 2.500 9 8-1.800-3-4.500-4-9-4v4.200z" fill="#bdbdbd"/>
 <path d="M62.500 23.500l-7.500-6v3.800c-5 0-8.500 2.500-9 8 1.800-3 4.500-4 9-4v4.200z" fill="#bdbdbd"/>
 <path d="M72.500 14v18" stroke="#c2c2c2" stroke-width="1"/>
 <rect x="82" y="14" width="16.500" height="13" fill="#5a5a5a"/><path d="M86 16.500h11M83.500 19.300h13.500M83.500 22h13.500M83.500 24.700h13.500" stroke="#d8d8d8" stroke-width="1"/><rect x="83" y="15" width="2.500" height="2.500" fill="#111"/><path d="M88 29.500h5M90.500 27.500v4M88.500 31.500h4" stroke="#222" stroke-width="1.200"/>
 <path d="M91 56h6l-3 3.500z" fill="#333"/>
 <text x="121.500" y="64" font-family="Liberation Sans" font-weight="bold" font-size="17" fill="#333">B</text>
 <text x="153" y="64" font-family="Liberation Sans" font-style="italic" font-weight="bold" font-size="17" fill="#333">I</text>
 <text x="181.500" y="64" font-family="Liberation Sans" font-weight="bold" font-size="17" fill="#333">S</text>
 <path d="M180 57.500h15" stroke="#333" stroke-width="1.500"/>
 <path d="M205 49v23" stroke="#c2c2c2" stroke-width="1"/>
 <text x="215.500" y="62.500" font-family="Liberation Sans" font-style="italic" font-weight="bold" font-size="16" fill="#333">T</text>
 <path d="M214.500 65h9" stroke="#333" stroke-width="1.300"/><path d="M226.500 61.500l4.500 4.500m0-4.500l-4.500 4.500" stroke="#333" stroke-width="1.600"/>
 <text x="255.500" y="63" font-family="Liberation Sans" font-weight="bold" font-size="15" fill="#333">A</text>
 <path d="M253.500 66.500h15" stroke="#555" stroke-width="1.500"/>
 <path d="M270.500 57h5.500l-2.750 3.200z" fill="#333"/>
 <rect x="290" y="49.500" width="15.500" height="15.500" rx="2.500" fill="#333"/>
 <text x="292.800" y="62.500" font-family="Liberation Sans" font-weight="bold" font-size="13.500" fill="#fff">A</text>
 <path d="M308 57h5.500l-2.750 3.200z" fill="#333"/>
</svg>
<div class="t" style="left:630.500px;top:603.500px;font-size:12.5px;color:#333">文字サイズ</div>

<!-- bottom link -->
<svg class="abs" style="left:323.500px;top:1087px" width="27" height="23" viewBox="0 0 27 23"><path d="M3 11.500h18M14 3.500l8.500 8-8.500 8" fill="none" stroke="#e78c2b" stroke-width="5.400" stroke-linecap="round" stroke-linejoin="round"/></svg>
<div class="t lnk" style="left:362px;top:1088.500px">詳しくはこちらをクリック</div>

<!-- page top -->
<svg class="abs" style="left:965px;top:1165px" width="146" height="110" viewBox="965 1165 146 110">
 <defs><pattern id="pl" width="30" height="30" patternUnits="userSpaceOnUse" x="978" y="1178"><rect width="30" height="30" fill="#e9c64c"/><rect width="15" height="30" fill="#e4be45" opacity=".7"/><rect width="30" height="15" fill="#ecc94f" opacity=".6"/></pattern></defs>
 <circle cx="1038" cy="1238.500" r="66" fill="#e9e3d2" opacity=".5"/>
 <circle cx="1038" cy="1237.700" r="64.800" fill="#fff"/>
 <circle cx="1038" cy="1237.700" r="59.500" fill="url(#pl)"/>
 <circle cx="1038" cy="1237.700" r="54" fill="none" stroke="#fff" stroke-width="2" stroke-dasharray="7.500 5" stroke-linecap="round"/>
 <path d="M1038.700 1203l14.500 14.200h-7.300v15h-14.400v-15h-7.300z" fill="#7b5a22" stroke="#fff" stroke-width="3" stroke-linejoin="round"/>
 <text x="1038" y="1260.500" text-anchor="middle" font-family="Liberation Sans" font-weight="bold" font-size="16.500" fill="#3a2a10" stroke="#fff" stroke-width="3" paint-order="stroke" stroke-linejoin="round">page top</text>
</svg>

<!--PAGE4-->
  </div></div>
  <div id="vthumb"></div>
  <div id="hthumb"></div>
</div>

<style>
#rstripe{position:absolute;left:1276px;top:46px;width:274px;height:1229px;background:linear-gradient(90deg,#1f1f1f 0 1.800px,#484848 1.800px 4.100px,#333 4.100px 5.900px,#454545 5.900px)}
.sec{position:absolute;left:1287.500px;width:255.500px;background:#5c5c5c;border:1px solid #484848;border-top-color:#757575;border-left-color:#4a4a4a;border-right-color:#4a4a4a}
.pl{position:absolute;white-space:nowrap;line-height:1;font-size:12.8px;color:#fff;text-shadow:0 1px 1px rgba(0,0,0,.55)}
.pb{position:absolute;height:26px;border:1px solid #2e2e2e;background:linear-gradient(#595959,#444);box-shadow:inset 0 1px 0 rgba(255,255,255,.13);color:#fff;font-size:12.8px;line-height:24px;text-align:center;text-shadow:0 1px 1px rgba(0,0,0,.6);white-space:nowrap;border-radius:2px}
.pb.dis{background:#4a4a4a;border-color:#424242;box-shadow:none;color:#777}
.hr{position:absolute;left:1288.500px;width:253.500px;height:2px;border-top:1px solid #4a4a4a;border-bottom:1px solid #666}
.rd{position:absolute;left:1309.800px;width:12.500px;height:12.500px;border-radius:50%;background:#fff}
.rl{position:absolute;left:1329px;font-size:12.800px;line-height:1;color:#fff;white-space:nowrap;text-shadow:0 1px 1px rgba(0,0,0,.5)}
.cbtn{position:absolute;background:#444;border:1px solid #2f2f2f;border-radius:3px}
</style>
<div id="rstripe"></div>
<div class="tbtn" style="left:1255px;width:107.500px"><svg width="15" height="11" viewBox="0 0 15 11"><path d="M.5 5.500C2.500 2 5 .8 7.500.8S12.500 2 14.500 5.500C12.500 9 10 10.200 7.500 10.200S2.500 9 .5 5.500z" fill="#fff"/><circle cx="7.500" cy="5.500" r="3.200" fill="#4d4d4d"/><circle cx="7.500" cy="5.500" r="1.700" fill="#fff"/></svg> プレビュー</div>
<div class="tbtn" style="left:1367px;width:172px"><svg width="15" height="12" viewBox="0 0 15 12"><path d="M.5 0h14v9H.5z M2 1.500v6h11v-6z" fill="#fff" fill-rule="evenodd"/><path d="M5 11h5v1H5z M6.500 9h2v2h-2z" fill="#fff"/></svg> 公開中のページを見る</div>

<!-- info box -->
<div class="sec" style="top:52px;height:92px;background:#555"></div>
<div class="pl" style="left:1302px;top:66.500px;font-size:13px;color:#b4b4b4;text-shadow:none;line-height:19.500px;width:230px;white-space:normal;top:63.500px">部品：(アイコン見出し+文章)×縦3+リ<br>ンク</div>
<svg class="abs" style="left:1302px;top:115.500px" width="15" height="12" viewBox="0 0 15 12"><path d="M1.200 0v6.500h8" fill="none" stroke="#1f1f1f" stroke-width="2.200"/><path d="M8.500 2l5.500 4.500L8.500 11z" fill="#1f1f1f"/></svg>
<div class="abs" style="left:1324px;top:108px;width:214px;height:22.500px;background:#fff;border:1.500px solid #3b6cf0;border-radius:3.500px;box-shadow:0 0 0 .5px #2f5fe0"></div>
<div class="pl" style="left:1331px;top:112.500px;font-size:13px;color:#3465e0;text-shadow:none">要素：誘導リンク</div>

<!-- tabs -->
<div class="abs" style="left:1287.500px;top:154.500px;width:128px;height:30px;background:linear-gradient(#505050,#454545);border-radius:5px 0 0 0;border-top:1px solid #606060;border-bottom:1px solid #5c5c5c"></div>
<div class="abs" style="left:1415.500px;top:154.500px;width:127.500px;height:33px;background:#232323;border-radius:0 5px 0 0"></div>
<div class="abs" style="left:1287.500px;top:184.500px;width:255.500px;height:3px;background:#232323"></div>
<div class="pl" style="left:1351.500px;top:161.500px;font-size:16.300px;transform:translateX(-50%);color:#e6e6e6">部品設定</div>
<div class="pl" style="left:1479px;top:161.500px;font-size:16.300px;transform:translateX(-50%);color:#f2f2f2">要素設定</div>

<!-- main section -->
<div class="abs" style="left:1286.600px;top:187.500px;width:256.400px;height:1087.500px;background:#505050;border-left:1.400px solid #383838"></div>
<div class="sec" style="top:187.500px;height:529px"></div>
<div class="pl" style="left:1298.500px;top:203.500px">要素の移動・複製・削除</div>
<div class="pb" style="left:1307.500px;top:224.300px;width:108px;border-radius:2px 0 0 2px"></div>
<div class="pb dis" style="left:1415px;top:224.300px;width:108px;border-radius:0 2px 2px 0"></div>
<svg class="abs" style="left:1355.500px;top:233.500px" width="11" height="7" viewBox="0 0 11 7"><path d="M0 6.500L5.500.5 11 6.500z" fill="#fff"/></svg>
<svg class="abs" style="left:1463.500px;top:234px" width="10" height="6" viewBox="0 0 10 6"><path d="M0 0h10L5 5.500z" fill="#777"/></svg>
<div class="pb" style="left:1309.500px;top:259.300px;width:103.500px"></div>
<svg class="abs" style="left:1333px;top:263.500px" width="18" height="18" viewBox="0 0 18 18"><path d="M7 2.500h4l3.500 0M6.500 5V3.500c0-.8.500-1.300 1.300-1.300h3.400l3 3v7c0 .8-.5 1.300-1.300 1.300H11" fill="none" stroke="#fff" stroke-width="1.400"/><path d="M2.500 7.500c0-.8.500-1.300 1.300-1.300h3.700l3 3v5.500c0 .8-.5 1.300-1.300 1.300H3.800c-.8 0-1.300-.5-1.300-1.300z" fill="#4d4d4d" stroke="#fff" stroke-width="1.400"/></svg>
<div class="pl" style="left:1354.500px;top:265.500px">複製</div>
<svg class="abs" style="left:1397.500px;top:269.500px" width="9" height="6" viewBox="0 0 9 6"><path d="M0 0h9L4.500 5.500z" fill="#fff"/></svg>
<div class="pb" style="left:1417.500px;top:259.300px;width:103.500px;background:linear-gradient(#b13b3b,#952e2e);border-color:#5e1f1f"></div>
<svg class="abs" style="left:1447px;top:264px" width="14" height="16" viewBox="0 0 14 16"><path d="M1 3.500h12M4.500 3V1.500h5V3M2.500 4l.7 10.500h7.600L11.500 4" fill="none" stroke="#fff" stroke-width="1.500"/><path d="M5.200 6v6.500M7 6v6.500M8.800 6v6.500" stroke="#fff" stroke-width="1.100"/></svg>
<div class="pl" style="left:1465.500px;top:265.500px">削除</div>

<div class="hr" style="top:296px"></div>
<div class="pl" style="left:1298.500px;top:312px">上側の余白</div>
<div class="pb" style="left:1307.500px;top:333.500px;width:108px;border-radius:2px 0 0 2px"></div>
<div class="pb" style="left:1415px;top:333.500px;width:108px;border-radius:0 2px 2px 0"></div>
<svg class="abs" style="left:1333.500px;top:340px" width="12" height="13" viewBox="0 0 12 13"><path d="M6 1v10M1.500 6.500L6 11.500l4.500-5" fill="none" stroke="#fff" stroke-width="2.400"/></svg>
<div class="pl" style="left:1349.500px;top:340px">広げる</div>
<svg class="abs" style="left:1441px;top:340px" width="12" height="13" viewBox="0 0 12 13"><path d="M6 12V2M1.500 6.500L6 1.500l4.500 5" fill="none" stroke="#fff" stroke-width="2.400"/></svg>
<div class="pl" style="left:1457px;top:340px">縮める</div>
<div class="pl" style="left:1415px;top:372px;transform:translateX(-50%);text-decoration:underline;text-underline-offset:2px;font-weight:bold;font-size:12.600px">余白の初期化</div>

<div class="hr" style="top:398.500px"></div>
<div class="pl" style="left:1298.500px;top:413.500px">リンク設定</div>
<div class="abs" style="left:1299.500px;top:436.800px;width:231.500px;height:15.200px;background:#fff;border-radius:1px"></div>
<div class="pl" style="left:1304px;top:438.500px;color:#000;text-shadow:none;font-size:12.500px">なし</div>
<svg class="abs" style="left:1517.500px;top:441.500px" width="10" height="7" viewBox="0 0 10 7"><path d="M1 1l4 4.500L9 1" fill="none" stroke="#222" stroke-width="1.500"/></svg>

<div class="pl" style="left:1298.500px;top:481px">位置設定</div>
<div class="pb" style="left:1309.500px;top:502px;width:53px;border-radius:2px 0 0 2px">なし</div>
<div class="pb" style="left:1362px;top:502px;width:53.500px;border-radius:0"></div>
<div class="pb" style="left:1415px;top:502px;width:53.500px;border-radius:0"></div>
<div class="pb dis" style="left:1468px;top:502px;width:53.500px;border-radius:0 2px 2px 0"></div>
<svg class="abs" style="left:1381px;top:509px" width="15" height="12" viewBox="0 0 15 12"><path d="M0 1h10M0 4.300h14M0 7.600h11M0 10.900h14" stroke="#fff" stroke-width="1.900"/></svg>
<svg class="abs" style="left:1434px;top:509px" width="15" height="12" viewBox="0 0 15 12"><path d="M4 1h7M1 4.300h13M3 7.600h9M.5 10.900h14" stroke="#fff" stroke-width="1.900"/></svg>
<svg class="abs" style="left:1487px;top:509px" width="15" height="12" viewBox="0 0 15 12"><path d="M4 1h10M0 4.300h14M3 7.600h11M0 10.900h14" stroke="#777" stroke-width="1.600"/></svg>

<div class="pl" style="left:1298.500px;top:560.500px">サイズ設定</div>
<div class="rd" style="top:587.500px"></div><div class="rl" style="top:586.500px">とても小さい</div>
<div class="rd" style="top:612px"></div><div class="rl" style="top:611px">小さい</div>
<div class="rd" style="top:636.500px;background:#2f62f0;border:2px solid #fff;box-shadow:0 0 0 1.300px #2f62f0"></div><div class="rl" style="top:635.500px">中</div>
<div class="rd" style="top:661px"></div><div class="rl" style="top:660px">大きい</div>
<div class="rd" style="top:685.500px"></div><div class="rl" style="top:684.500px">とても大きい</div>

<!-- band + add section -->
<div class="sec" style="top:727.500px;height:67px;background:#575757"></div>
<div class="abs" style="left:1303px;top:739px;width:225px;height:43.500px;border:1px solid #2c4650;border-radius:2px;background:linear-gradient(#6799a8,#4a7482);box-shadow:inset 0 1px 0 rgba(255,255,255,.2)"></div>
<svg class="abs" style="left:1354px;top:752.500px" width="16" height="16" viewBox="0 0 16 16"><circle cx="8" cy="8" r="7.500" fill="#fff"/><path d="M8 3.500v9M3.500 8h9" stroke="#4f7c8a" stroke-width="2.800"/></svg>
<div class="pl" style="left:1374px;top:754px;font-size:12.800px">部品に要素を追加</div>
<div class="sec" style="top:804px;height:469px"></div>
<div class="pb" style="left:1298.500px;top:815px;width:233.500px;height:26.500px;background:linear-gradient(#575757,#3e3e3e);border-color:#2a2a2a">部品設定</div>

<!-- collapse buttons -->
<div class="cbtn" style="left:1253px;top:1227.500px;width:26px;height:38.500px;border-radius:3px 0 0 3px;border-right:none"></div>
<svg class="abs" style="left:1261.500px;top:1238.500px" width="13" height="15" viewBox="0 0 13 15"><path d="M.5.500v14l12-7z" fill="#000"/></svg>
<div class="cbtn" style="left:14px;top:1191px;width:25.500px;height:75.500px;border-radius:0 3px 3px 0;border-left:none"></div>
<svg class="abs" style="left:17px;top:1204px" width="16" height="14" viewBox="0 0 16 14"><path d="M8 .5v12.500L1 6.750z M15 .5v12.500L8 6.750z" fill="#000"/></svg>
<div class="abs" style="left:14px;top:1227px;width:20px;height:1px;background:#2b2b2b"></div>
<svg class="abs" style="left:18px;top:1241.500px" width="13" height="14" viewBox="0 0 13 14"><path d="M.5.500v13l12-6.500z" fill="#000"/></svg>

<!-- red highlight -->
<div class="abs" style="left:1277px;top:462px;width:264px;height:92px;border:10px solid #fb0000;box-shadow:0 0 8px 2.500px rgba(255,255,255,.88),0 0 3px 1px #fff,inset 0 0 7px 4px #fff,inset 0 0 14px 3px rgba(255,255,255,.75)"></div>

</body>
</html>
